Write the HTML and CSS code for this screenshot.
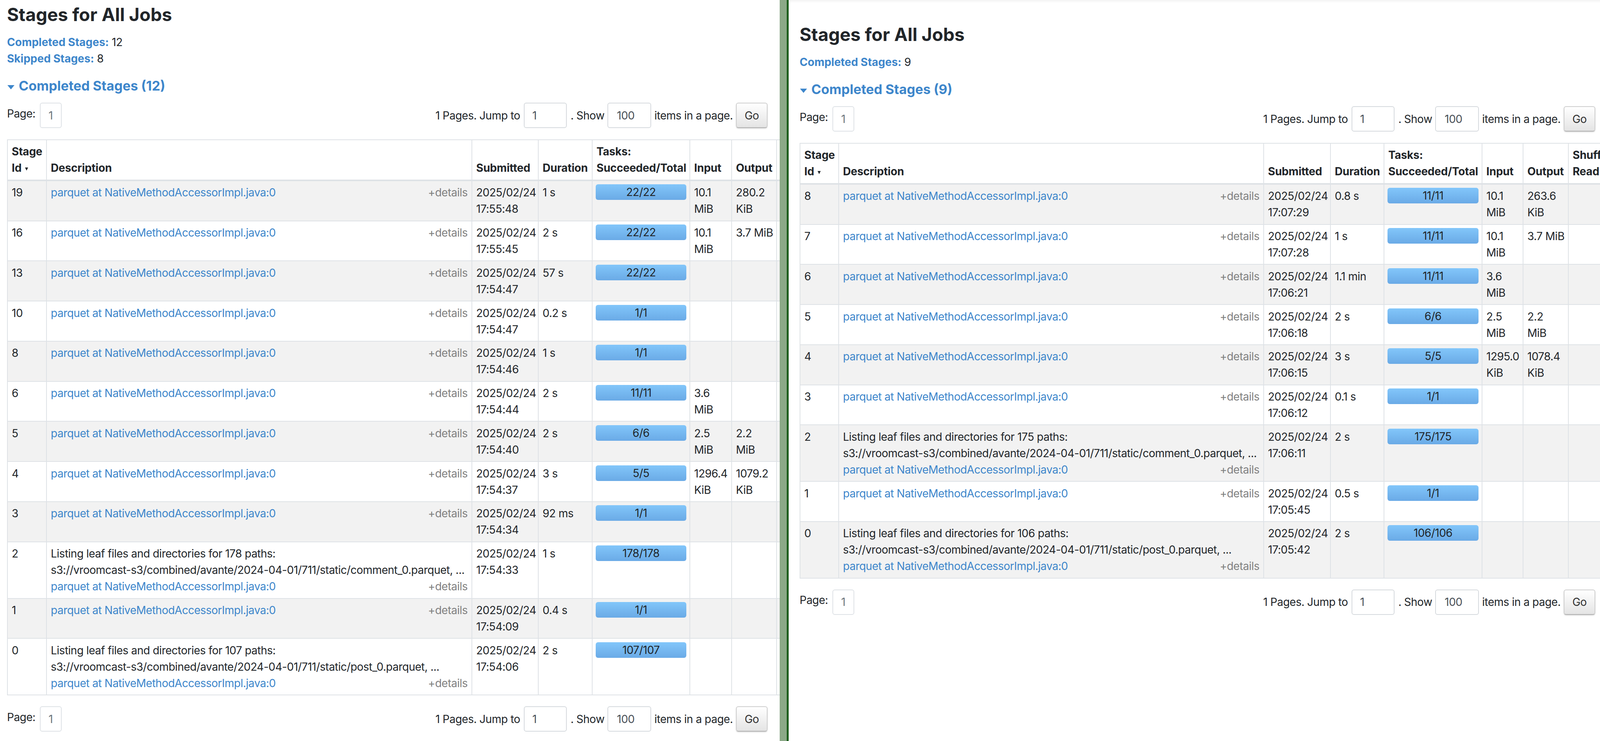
FILE: index.html
```html
<!DOCTYPE html>
<html lang="en">
<head>
<meta charset="utf-8">
<title>Stages for All Jobs</title>
<link rel="stylesheet" href="styles.css">
</head>
<body>
<div class="screen">

  <!-- LEFT WINDOW -->
  <div class="pane pane-left">
    <h3 class="title">Stages for All Jobs</h3>
    <ul class="summary">
      <li><a class="sum-link">Completed Stages:</a> 12</li>
      <li><a class="sum-link">Skipped Stages:</a> 8</li>
    </ul>
    <h4 class="section"><span class="arrow-open"></span><a class="section-link">Completed Stages (12)</a></h4>

    <div class="pager">
      <div class="pager-left"><span class="page-label">Page:</span><span class="page-box">1</span></div>
      <div class="pager-right">
        <span class="pl">1 Pages. Jump to</span><input class="pin pin-jump" value="1"><span class="pl">. Show</span><input class="pin pin-show" value="100"><span class="pl">items in a page.</span><button class="go">Go</button>
      </div>
    </div>

    <table class="stages stages-left">
      <colgroup>
        <col class="c-id"><col class="c-desc"><col class="c-sub"><col class="c-dur"><col class="c-task"><col class="c-in"><col class="c-out"><col class="c-sr"><col class="c-sw">
      </colgroup>
      <thead>
        <tr><th>Stage<br>Id<span class="sort"></span></th><th>Description</th><th>Submitted</th><th>Duration</th><th>Tasks:<br>Succeeded/Total</th><th>Input</th><th>Output</th><th>Shuffle<br>Read</th><th>Shuffle<br>Write</th></tr>
      </thead>
      <tbody>
        <tr><td>19</td><td><div class="desc"><a class="name">parquet at NativeMethodAccessorImpl.java:0</a><span class="details">+details</span></div></td><td>2025/02/24<br>17:55:48</td><td>1 s</td><td class="tasks"><div class="bar">22/22</div></td><td>10.1<br>MiB</td><td>280.2<br>KiB</td><td></td><td></td></tr>
        <tr><td>16</td><td><div class="desc"><a class="name">parquet at NativeMethodAccessorImpl.java:0</a><span class="details">+details</span></div></td><td>2025/02/24<br>17:55:45</td><td>2 s</td><td class="tasks"><div class="bar">22/22</div></td><td>10.1<br>MiB</td><td>3.7 MiB</td><td></td><td></td></tr>
        <tr><td>13</td><td><div class="desc"><a class="name">parquet at NativeMethodAccessorImpl.java:0</a><span class="details">+details</span></div></td><td>2025/02/24<br>17:54:47</td><td>57 s</td><td class="tasks"><div class="bar">22/22</div></td><td></td><td></td><td></td><td></td></tr>
        <tr><td>10</td><td><div class="desc"><a class="name">parquet at NativeMethodAccessorImpl.java:0</a><span class="details">+details</span></div></td><td>2025/02/24<br>17:54:47</td><td>0.2 s</td><td class="tasks"><div class="bar">1/1</div></td><td></td><td></td><td></td><td></td></tr>
        <tr><td>8</td><td><div class="desc"><a class="name">parquet at NativeMethodAccessorImpl.java:0</a><span class="details">+details</span></div></td><td>2025/02/24<br>17:54:46</td><td>1 s</td><td class="tasks"><div class="bar">1/1</div></td><td></td><td></td><td></td><td></td></tr>
        <tr><td>6</td><td><div class="desc"><a class="name">parquet at NativeMethodAccessorImpl.java:0</a><span class="details">+details</span></div></td><td>2025/02/24<br>17:54:44</td><td>2 s</td><td class="tasks"><div class="bar">11/11</div></td><td>3.6<br>MiB</td><td></td><td></td><td></td></tr>
        <tr><td>5</td><td><div class="desc"><a class="name">parquet at NativeMethodAccessorImpl.java:0</a><span class="details">+details</span></div></td><td>2025/02/24<br>17:54:40</td><td>2 s</td><td class="tasks"><div class="bar">6/6</div></td><td>2.5<br>MiB</td><td>2.2<br>MiB</td><td></td><td></td></tr>
        <tr><td>4</td><td><div class="desc"><a class="name">parquet at NativeMethodAccessorImpl.java:0</a><span class="details">+details</span></div></td><td>2025/02/24<br>17:54:37</td><td>3 s</td><td class="tasks"><div class="bar">5/5</div></td><td>1296.4<br>KiB</td><td>1079.2<br>KiB</td><td></td><td></td></tr>
        <tr><td>3</td><td><div class="desc"><a class="name">parquet at NativeMethodAccessorImpl.java:0</a><span class="details">+details</span></div></td><td>2025/02/24<br>17:54:34</td><td>92 ms</td><td class="tasks"><div class="bar">1/1</div></td><td></td><td></td><td></td><td></td></tr>
        <tr><td>2</td><td><div>Listing leaf files and directories for 178 paths:</div><div>s3://vroomcast-s3/combined/avante/2024-04-01/711/static/comment_0.parquet, ...</div><div class="desc"><a class="name">parquet at NativeMethodAccessorImpl.java:0</a><span class="details">+details</span></div></td><td>2025/02/24<br>17:54:33</td><td>1 s</td><td class="tasks"><div class="bar">178/178</div></td><td></td><td></td><td></td><td></td></tr>
        <tr><td>1</td><td><div class="desc"><a class="name">parquet at NativeMethodAccessorImpl.java:0</a><span class="details">+details</span></div></td><td>2025/02/24<br>17:54:09</td><td>0.4 s</td><td class="tasks"><div class="bar">1/1</div></td><td></td><td></td><td></td><td></td></tr>
        <tr><td>0</td><td><div>Listing leaf files and directories for 107 paths:</div><div>s3://vroomcast-s3/combined/avante/2024-04-01/711/static/post_0.parquet, ...</div><div class="desc"><a class="name">parquet at NativeMethodAccessorImpl.java:0</a><span class="details">+details</span></div></td><td>2025/02/24<br>17:54:06</td><td>2 s</td><td class="tasks"><div class="bar">107/107</div></td><td></td><td></td><td></td><td></td></tr>
      </tbody>
    </table>

    <div class="pager pager-bottom">
      <div class="pager-left"><span class="page-label">Page:</span><span class="page-box">1</span></div>
      <div class="pager-right">
        <span class="pl">1 Pages. Jump to</span><input class="pin pin-jump" value="1"><span class="pl">. Show</span><input class="pin pin-show" value="100"><span class="pl">items in a page.</span><button class="go">Go</button>
      </div>
    </div>
  </div>

  <div class="divider"></div>

  <!-- RIGHT WINDOW -->
  <div class="pane pane-right">
    <h3 class="title">Stages for All Jobs</h3>
    <ul class="summary">
      <li><a class="sum-link">Completed Stages:</a> 9</li>
    </ul>
    <h4 class="section"><span class="arrow-open"></span><a class="section-link">Completed Stages (9)</a></h4>

    <div class="pager">
      <div class="pager-left"><span class="page-label">Page:</span><span class="page-box">1</span></div>
      <div class="pager-right">
        <span class="pl">1 Pages. Jump to</span><input class="pin pin-jump" value="1"><span class="pl">. Show</span><input class="pin pin-show" value="100"><span class="pl">items in a page.</span><button class="go">Go</button>
      </div>
    </div>

    <table class="stages stages-right">
      <colgroup>
        <col class="c-id"><col class="c-desc"><col class="c-sub"><col class="c-dur"><col class="c-task"><col class="c-in"><col class="c-out"><col class="c-sr"><col class="c-sw">
      </colgroup>
      <thead>
        <tr><th>Stage<br>Id<span class="sort"></span></th><th>Description</th><th>Submitted</th><th>Duration</th><th>Tasks:<br>Succeeded/Total</th><th>Input</th><th>Output</th><th>Shuffle<br>Read</th><th>Shuffle<br>Write</th></tr>
      </thead>
      <tbody>
        <tr><td>8</td><td><div class="desc"><a class="name">parquet at NativeMethodAccessorImpl.java:0</a><span class="details">+details</span></div></td><td>2025/02/24<br>17:07:29</td><td>0.8 s</td><td class="tasks"><div class="bar">11/11</div></td><td>10.1<br>MiB</td><td>263.6<br>KiB</td><td></td><td></td></tr>
        <tr><td>7</td><td><div class="desc"><a class="name">parquet at NativeMethodAccessorImpl.java:0</a><span class="details">+details</span></div></td><td>2025/02/24<br>17:07:28</td><td>1 s</td><td class="tasks"><div class="bar">11/11</div></td><td>10.1<br>MiB</td><td>3.7 MiB</td><td></td><td></td></tr>
        <tr><td>6</td><td><div class="desc"><a class="name">parquet at NativeMethodAccessorImpl.java:0</a><span class="details">+details</span></div></td><td>2025/02/24<br>17:06:21</td><td>1.1 min</td><td class="tasks"><div class="bar">11/11</div></td><td>3.6<br>MiB</td><td></td><td></td><td></td></tr>
        <tr><td>5</td><td><div class="desc"><a class="name">parquet at NativeMethodAccessorImpl.java:0</a><span class="details">+details</span></div></td><td>2025/02/24<br>17:06:18</td><td>2 s</td><td class="tasks"><div class="bar">6/6</div></td><td>2.5<br>MiB</td><td>2.2<br>MiB</td><td></td><td></td></tr>
        <tr><td>4</td><td><div class="desc"><a class="name">parquet at NativeMethodAccessorImpl.java:0</a><span class="details">+details</span></div></td><td>2025/02/24<br>17:06:15</td><td>3 s</td><td class="tasks"><div class="bar">5/5</div></td><td>1295.0<br>KiB</td><td>1078.4<br>KiB</td><td></td><td></td></tr>
        <tr><td>3</td><td><div class="desc"><a class="name">parquet at NativeMethodAccessorImpl.java:0</a><span class="details">+details</span></div></td><td>2025/02/24<br>17:06:12</td><td>0.1 s</td><td class="tasks"><div class="bar">1/1</div></td><td></td><td></td><td></td><td></td></tr>
        <tr><td>2</td><td><div>Listing leaf files and directories for 175 paths:</div><div>s3://vroomcast-s3/combined/avante/2024-04-01/711/static/comment_0.parquet, ...</div><div class="desc"><a class="name">parquet at NativeMethodAccessorImpl.java:0</a><span class="details">+details</span></div></td><td>2025/02/24<br>17:06:11</td><td>2 s</td><td class="tasks"><div class="bar">175/175</div></td><td></td><td></td><td></td><td></td></tr>
        <tr><td>1</td><td><div class="desc"><a class="name">parquet at NativeMethodAccessorImpl.java:0</a><span class="details">+details</span></div></td><td>2025/02/24<br>17:05:45</td><td>0.5 s</td><td class="tasks"><div class="bar">1/1</div></td><td></td><td></td><td></td><td></td></tr>
        <tr><td>0</td><td><div>Listing leaf files and directories for 106 paths:</div><div>s3://vroomcast-s3/combined/avante/2024-04-01/711/static/post_0.parquet, ...</div><div class="desc"><a class="name">parquet at NativeMethodAccessorImpl.java:0</a><span class="details">+details</span></div></td><td>2025/02/24<br>17:05:42</td><td>2 s</td><td class="tasks"><div class="bar">106/106</div></td><td></td><td></td><td></td><td></td></tr>
      </tbody>
    </table>

    <div class="pager pager-bottom">
      <div class="pager-left"><span class="page-label">Page:</span><span class="page-box">1</span></div>
      <div class="pager-right">
        <span class="pl">1 Pages. Jump to</span><input class="pin pin-jump" value="1"><span class="pl">. Show</span><input class="pin pin-show" value="100"><span class="pl">items in a page.</span><button class="go">Go</button>
      </div>
    </div>
  </div>

</div>
</body>
</html>
```

FILE: styles.css
```css
* { box-sizing: border-box; }

html, body {
  margin: 0;
  padding: 0;
}

body {
  width: 4104px;
  height: 1898px;
  overflow: hidden;
  background: #ffffff;
  color: #212529;
  font-family: Inter, "Noto Sans", "Liberation Sans", sans-serif;
  font-size: 28px;
  line-height: 42px;
  letter-spacing: -0.5px;
}

.screen {
  display: flex;
  width: 4104px;
  height: 1898px;
}

/* ---------- window panes ---------- */
.pane {
  height: 1898px;
  overflow: hidden;
  background: #ffffff;
}

.pane-left {
  flex: none;
  width: 1996px;
  padding: 0 31px 0 18px;
}

.divider {
  flex: none;
  width: 23px;
  background: #8ba987;
  border-right: 5px solid #1e5f1e;
}

.pane-right {
  flex: 1;
  min-width: 0;
  padding: 51px 20px 0 28px;
  box-shadow: inset 0 7px 8px -5px rgba(0, 0, 0, 0.07);
}

/* ---------- headings ---------- */
.title {
  margin: 9px 0 0;
  font-size: 46px;
  line-height: 56px;
  font-weight: 700;
  letter-spacing: 0;
  color: #212529;
}

.summary {
  list-style: none;
  margin: 22px 0 0;
  padding: 0;
}

.summary li {
  height: 42px;
}

.sum-link {
  color: #3d86cb;
  font-weight: 700;
  letter-spacing: 0;
}

.section {
  display: flex;
  align-items: flex-start;
  margin: 28px 0 0;
  font-size: 34px;
  line-height: 41px;
  font-weight: 700;
  letter-spacing: 0;
}

.section-link {
  color: #3d86cb;
}

.arrow-open {
  width: 0;
  height: 0;
  margin: 19px 11px 0 1px;
  border-left: 9px solid transparent;
  border-right: 9px solid transparent;
  border-top: 11px solid #3d86cb;
}

/* ---------- pagination ---------- */
.pager {
  display: flex;
  justify-content: space-between;
  align-items: center;
  height: 65px;
  margin-top: 23px;
}

.pager-bottom {
  margin-top: 28px;
}

.pager-left {
  display: flex;
  align-items: center;
}

.page-label {
  padding-bottom: 10px;
  margin-right: 11px;
}

.page-box {
  display: flex;
  align-items: center;
  justify-content: center;
  width: 56px;
  height: 65px;
  border: 2px solid #dee2e6;
  border-radius: 6px;
  color: #6c757d;
}

.pager-right {
  display: flex;
  align-items: center;
}

.pin {
  height: 65px;
  border: 2px solid #d6dade;
  border-radius: 6px;
  padding: 0 0 0 20px;
  font: inherit;
  letter-spacing: -0.5px;
  color: #495057;
  background: #ffffff;
  outline: none;
}

.pin-jump {
  width: 110px;
  margin: 0 10px 0 9px;
}

.pin-show {
  width: 112px;
  padding-left: 22px;
  margin: 0 8px 0 8px;
}

.go {
  width: 81px;
  height: 65px;
  margin-left: 8px;
  border: 2px solid #cfcfcf;
  border-bottom-color: #b0b0b0;
  border-radius: 6px;
  background: linear-gradient(#ffffff, #e4e4e4);
  box-shadow: 0 2px 3px rgba(0, 0, 0, 0.12);
  font: inherit;
  letter-spacing: -0.5px;
  color: #333333;
  padding: 0;
}

/* ---------- stage table ---------- */
.stages {
  border-collapse: collapse;
  table-layout: fixed;
  margin-top: 29px;
}

.stages-left { width: 2209px; }
.stages-right { width: 2207px; }

.stages-left .c-id { width: 100px; }
.stages-left .c-desc { width: 1089px; }
.stages-left .c-sub { width: 170px; }
.stages-left .c-dur { width: 138px; }
.stages-left .c-task { width: 250px; }
.stages-left .c-in { width: 107px; }
.stages-left .c-out { width: 115px; }
.stages-left .c-sr { width: 120px; }
.stages-left .c-sw { width: 120px; }

.stages-right .c-id { width: 99px; }
.stages-right .c-desc { width: 1088px; }
.stages-right .c-sub { width: 171px; }
.stages-right .c-dur { width: 137px; }
.stages-right .c-task { width: 251px; }
.stages-right .c-in { width: 105px; }
.stages-right .c-out { width: 116px; }
.stages-right .c-sr { width: 120px; }
.stages-right .c-sw { width: 120px; }

.stages th,
.stages td {
  border: 2px solid #dee2e6;
  padding: 8.4px 10px;
  text-align: left;
  vertical-align: top;
  white-space: nowrap;
}

.stages td {
  overflow: hidden;
}

.stages thead th {
  border-bottom-width: 4px;
  vertical-align: bottom;
  font-weight: 700;
  letter-spacing: -0.2px;
  padding-right: 4px;
}

.stages tbody tr:nth-child(odd) {
  background: #f2f2f2;
}

.sort {
  display: inline-block;
  width: 0;
  height: 0;
  margin-left: 9px;
  vertical-align: 3px;
  border-left: 4px solid transparent;
  border-right: 4px solid transparent;
  border-top: 8px solid #212529;
}

.desc {
  display: flex;
  justify-content: space-between;
}

.name {
  color: #3d86cb;
}

.details {
  color: #808080;
}

.stages td.tasks {
  padding-left: 8px;
  padding-right: 8px;
}

.bar {
  height: 40px;
  line-height: 40px;
  border-radius: 6px;
  background: linear-gradient(#82c6fa, #6aaae6);
  text-align: center;
  color: #212529;
}
```
